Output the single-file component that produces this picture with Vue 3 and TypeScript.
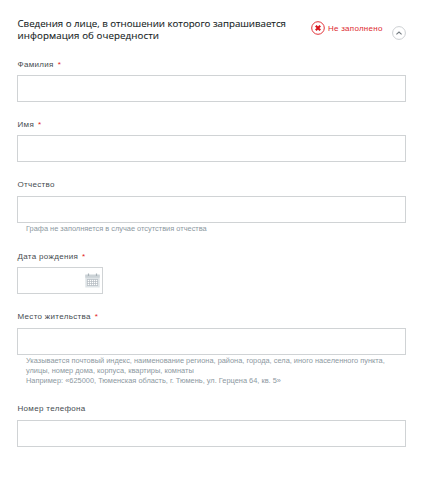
<script setup lang="ts">
import { reactive, ref } from 'vue'

interface Field {
  id: string
  label: string
  required?: boolean
  date?: boolean
  hint?: string[]
}

const fields: Field[] = [
  { id: 'surname', label: 'Фамилия', required: true },
  { id: 'name', label: 'Имя', required: true },
  { id: 'patronymic', label: 'Отчество', hint: ['Графа не заполняется в случае отсутствия отчества'] },
  { id: 'birthdate', label: 'Дата рождения', required: true, date: true },
  {
    id: 'address',
    label: 'Место жительства',
    required: true,
    hint: [
      'Указывается почтовый индекс, наименование региона, района, города, села, иного населенного пункта,',
      'улицы, номер дома, корпуса, квартиры, комнаты',
      'Например: «625000, Тюменская область, г. Тюмень, ул. Герцена 64, кв. 5»',
    ],
  },
  { id: 'phone', label: 'Номер телефона' },
]

const values = reactive<Record<string, string>>({})
const open = ref(true)
</script>

<template>
  <section class="panel">
    <header class="head">
      <h2 class="title"><span class="line first">Сведения о лице, в отношении которого запрашивается</span><span class="line second">информация об очередности</span></h2>
      <div class="status">
        <svg class="status-icon" viewBox="0 0 14 14">
          <circle cx="7" cy="7" r="6.3" fill="#fff" stroke="#e23238" stroke-width="1" />
          <path d="M4.8 4.8 9.2 9.2M9.2 4.8 4.8 9.2" stroke="#d8141c" stroke-width="2.1" />
        </svg>
        <span class="status-text">Не заполнено</span>
      </div>
      <button class="toggle" type="button" @click="open = !open">
        <svg viewBox="0 0 14 14">
          <circle cx="7" cy="7" r="6.4" fill="#fff" stroke="#c6cacd" stroke-width="0.9" />
          <path d="M4.4 8.3 7 6l2.6 2.3" fill="none" stroke="#747b80" stroke-width="1.1" />
        </svg>
      </button>
    </header>

    <form v-if="open" class="form">
      <div v-for="f in fields" :key="f.id" class="field" :class="f.id">
        <label class="label" :for="f.id"><span>{{ f.label }}</span><span v-if="f.required" class="star">*</span></label>
        <div class="box" :class="{ date: f.date }">
          <input :id="f.id" v-model="values[f.id]" type="text" />
          <svg v-if="f.date" class="cal" viewBox="0 0 15 15">
            <path d="M.3 2h14.4v12.5H.3z" fill="#dfe4e7" />
            <path d="M.3 1.5h14.4v3.2H.3z" fill="#cbd2d6" />
            <path d="M3.5.5v2.5M11.5.5v2.5" stroke="#a9b2b8" stroke-width="1.2" />
            <path d="M2 6.5h11v6H2z" fill="#fff" />
            <path d="M2 6.5h11M2 8.5h11M2 10.5h11M2 12.5h11M2.5 6.5v6M4.5 6.5v6M6.5 6.5v6M8.5 6.5v6M10.5 6.5v6M12.5 6.5v6" stroke="#aeb7bd" stroke-width="0.65" />
          </svg>
        </div>
        <p v-if="f.hint" class="hint"><span v-for="(line, i) in f.hint" :key="i">{{ line }}</span></p>
      </div>
    </form>
  </section>
</template>

<style>
body {
  background: #fff;
}
</style>

<style scoped>
.panel {
  box-sizing: border-box;
  min-height: 498px;
  padding: 17px 19px 0 17px;
  font-family: 'Liberation Sans', Arial, sans-serif;
}
.head {
  display: flex;
  height: 41px;
}
.title {
  flex: none;
  box-sizing: border-box;
  width: 294px;
  margin: 0;
  padding: 1px 0 0 0.5px;
  font: 400 9.7px/12px 'Open Sans', sans-serif;
  color: #141c22;
  -webkit-text-stroke: 0.1px #141c22;
  white-space: nowrap;
}
.line {
  display: block;
}
.first {
  letter-spacing: -0.01px;
}
.second {
  letter-spacing: 0.1px;
}
.status {
  display: flex;
  align-items: center;
  width: 80px;
  height: 14px;
  margin-top: 4px;
  color: #dd2a30;
  font-size: 8px;
  letter-spacing: 0.25px;
  white-space: nowrap;
}
.status-icon {
  flex: none;
  width: 14px;
  height: 14px;
  margin: -1px 3px 0 0;
}
.toggle {
  width: 14px;
  height: 14px;
  margin: 9px 0 0 1px;
  padding: 0;
  border: 0;
  background: none;
}
.toggle svg {
  display: block;
}
.field {
  margin-bottom: 16.3px;
}
.label {
  display: flex;
  height: 12px;
  margin-bottom: 4.4px;
  padding: 0.6px 0 0 0.5px;
  font-size: 8px;
  line-height: 12px;
  letter-spacing: 0.32px;
  color: #454b50;
  white-space: nowrap;
}
.star {
  margin-left: 4px;
  color: #e21b1b;
}
.box {
  box-sizing: border-box;
  display: flex;
  align-items: center;
  height: 27px;
  border: 1px solid #d0d3d5;
}
.box.date {
  width: 86px;
}
.box input {
  flex: 1;
  min-width: 0;
  height: 100%;
  padding: 0 8px;
  box-sizing: border-box;
  border: 0;
  outline: 0;
  background: none;
  font: inherit;
}
.cal {
  flex: none;
  width: 15px;
  height: 15px;
  margin-right: 2px;
}
.hint {
  margin: 1px 0 0 9px;
  font-size: 7.42px;
  line-height: 10.3px;
  color: #8d999f;
  white-space: nowrap;
}
.hint span {
  display: block;
}
.field.birthdate {
  margin-bottom: 16.5px;
}
.field.address {
  margin-bottom: 16.3px;
}
</style>
